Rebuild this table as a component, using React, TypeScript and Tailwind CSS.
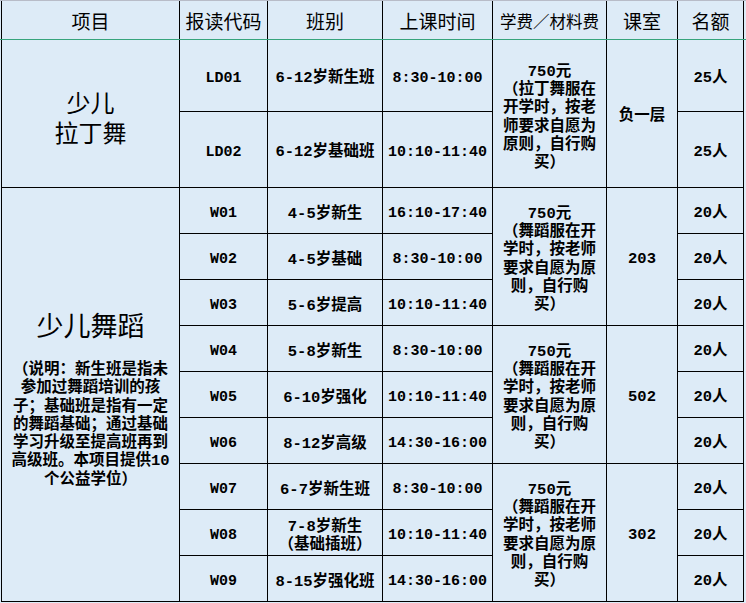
import type { ReactNode } from "react";

const BG = "bg-[#ddebf7]";

function Cell({ children, className = "pt-[7px]" }: { children?: ReactNode; className?: string }) {
  return (
    <div className={`${BG} flex items-center justify-center text-center ${className}`}>
      {children}
    </div>
  );
}

function Lines({ lines }: { lines: string[] }) {
  return (
    <div className="flex flex-col items-center leading-[18.2px]">
      {lines.map((l, i) => (
        <span key={i} className="whitespace-nowrap">
          {l}
        </span>
      ))}
    </div>
  );
}

const latinFee = ["750元", "（拉丁舞服在", "开学时，按老", "师要求自愿为", "原则，自行购", "买）"];
const danceFee = ["750元", "（舞蹈服在开", "学时，按老师", "要求自愿为原", "则，自行购", "买）"];

const danceRows = [
  { code: "W01", cls: ["4-5岁新生"], time: "16:10-17:40" },
  { code: "W02", cls: ["4-5岁基础"], time: "8:30-10:00" },
  { code: "W03", cls: ["5-6岁提高"], time: "10:10-11:40" },
  { code: "W04", cls: ["5-8岁新生"], time: "8:30-10:00" },
  { code: "W05", cls: ["6-10岁强化"], time: "10:10-11:40" },
  { code: "W06", cls: ["8-12岁高级"], time: "14:30-16:00" },
  { code: "W07", cls: ["6-7岁新生班"], time: "8:30-10:00" },
  { code: "W08", cls: ["7-8岁新生", "（基础插班）"], time: "10:10-11:40" },
  { code: "W09", cls: ["8-15岁强化班"], time: "14:30-16:00" },
];

const rooms = ["203", "502", "302"];

const desc = [
  "（说明：新生班是指未",
  "参加过舞蹈培训的孩",
  "子；基础班是指有一定",
  "的舞蹈基础；通过基础",
  "学习升级至提高班再到",
  "高级班。本项目提供10",
  "个公益学位）",
];

const cols = "grid-cols-[177px_87px_114px_109px_113px_70px_65px]";
const headers = ["项目", "报读代码", "班别", "上课时间", "学费／材料费", "课室", "名额"];

export default function App() {
  return (
    <div className={`w-[746px] h-[603px] overflow-hidden ${BG} text-black font-['Liberation_Mono','Noto_Sans_CJK_SC',monospace] font-bold`}>
      <div className="border-t border-b border-t-[#b8bcc8] border-b-[#36a47c]">
        <div className={`ml-px w-fit grid ${cols} grid-rows-[38px] gap-x-px px-px bg-black`}>
          {headers.map((h, i) => (
            <Cell key={h} className={`pt-[8px] font-normal ${i === 4 ? "text-[16.5px]" : "text-[19px]"}`}>
              {h}
            </Cell>
          ))}
        </div>
      </div>

      <div
        className={`ml-px w-fit grid ${cols} grid-rows-[71px_75px_repeat(9,45px)] gap-px px-px pb-px bg-black text-[15.5px]`}
      >
        <Cell className="row-span-2 pt-[14px] font-normal text-[24px] leading-[30px]">
          <div className="flex flex-col items-center">
            <span>少儿</span>
            <span>拉丁舞</span>
          </div>
        </Cell>
        <Cell className="pt-[7px] text-[15px]">LD01</Cell>
        <Cell>6-12岁新生班</Cell>
        <Cell className="pt-[7px] text-[15px]">8:30-10:00</Cell>
        <Cell className="row-span-2 pt-[8px]">
          <Lines lines={latinFee} />
        </Cell>
        <Cell className="row-span-2 pt-[7px]">负一层</Cell>
        <Cell>25人</Cell>

        <Cell className="pt-[7px] text-[15px]">LD02</Cell>
        <Cell>6-12岁基础班</Cell>
        <Cell className="pt-[7px] text-[15px]">10:10-11:40</Cell>
        <Cell>25人</Cell>

        {danceRows.map((r, i) => (
          <>
            {i === 0 && (
              <Cell key="title" className="row-span-9 pt-[10px]">
                <div className="flex flex-col items-center">
                  <span className="font-normal text-[27px] leading-[34px] mb-[17px] translate-y-[2px]">少儿舞蹈</span>
                  <Lines lines={desc} />
                </div>
              </Cell>
            )}
            <Cell key={r.code} className="pt-[7px] text-[15px]">
              {r.code}
            </Cell>
            <Cell key={r.code + "c"}>
              <Lines lines={r.cls} />
            </Cell>
            <Cell key={r.code + "t"} className="pt-[7px] text-[15px]">
              {r.time}
            </Cell>
            {i % 3 === 0 && (
              <Cell key={r.code + "f"} className="row-span-3 pt-[6px]">
                <Lines lines={danceFee} />
              </Cell>
            )}
            {i % 3 === 0 && (
              <Cell key={r.code + "r"} className="row-span-3 pt-[7px]">
                {rooms[i / 3]}
              </Cell>
            )}
            <Cell key={r.code + "q"}>20人</Cell>
          </>
        ))}
      </div>
    </div>
  );
}
